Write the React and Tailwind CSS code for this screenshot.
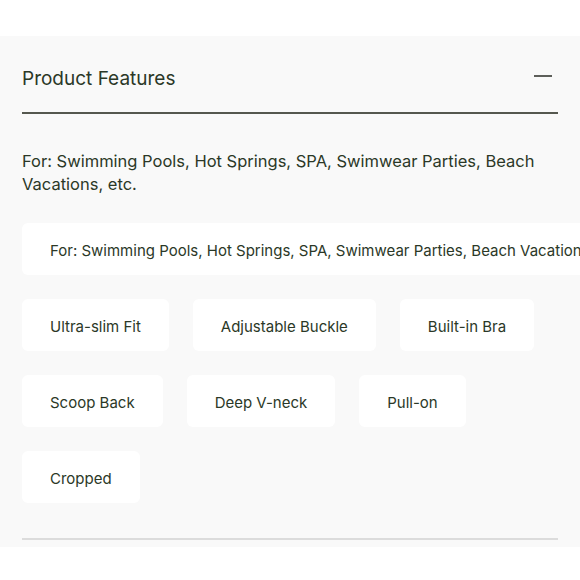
export default function App() {
  const chips = [
    "Ultra-slim Fit",
    "Adjustable Buckle",
    "Built-in Bra",
    "Scoop Back",
    "Deep V-neck",
    "Pull-on",
    "Cropped",
  ];
  const font = { fontFamily: "Inter, 'Noto Sans', sans-serif" };
  return (
    <div className="bg-white w-[580px] h-[580px] pt-[36px]" style={font}>
      <div className="bg-[#f9f9f9] h-[511px] overflow-hidden px-[22px]">
        <div className="flex items-center justify-between h-[78px] border-b-2 border-[#55584f]">
          <h2 className="text-[19px] leading-none text-[#2b3827] pt-[8px]">Product Features</h2>
          <div className="w-[18px] h-[2px] bg-[#5d5f5a] mr-[6px] mt-[3px]" />
        </div>
        <p className="mt-[36px] text-[16.5px] leading-[23px] text-[#2b3827] pr-[10px]">
          For: Swimming Pools, Hot Springs, SPA, Swimwear Parties, Beach Vacations, etc.
        </p>
        <div className="mt-[27px] flex flex-wrap gap-x-6 gap-y-6">
          <div className="h-[52px] bg-white rounded-md px-7 pt-[4px] flex items-center whitespace-nowrap text-[15px] text-[#2b3827]">
            For: Swimming Pools, Hot Springs, SPA, Swimwear Parties, Beach Vacations, etc.
          </div>
          {chips.map((c) => (
            <div
              key={c}
              className="h-[52px] bg-white rounded-md px-7 pt-[4px] flex items-center whitespace-nowrap text-[15px] text-[#2b3827]"
            >
              {c}
            </div>
          ))}
        </div>
        <div className="mt-[35px] h-[2px] bg-[#dcdcdc]" />
      </div>
    </div>
  );
}
